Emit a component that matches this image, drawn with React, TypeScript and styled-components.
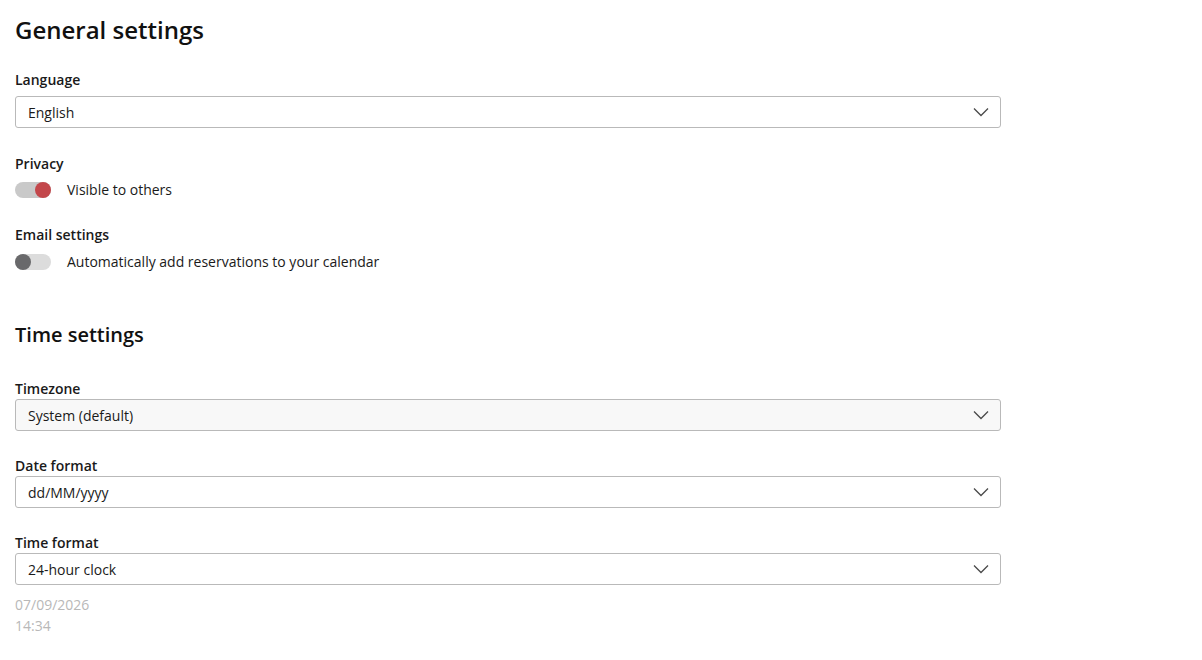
import React, { useState } from "react";
import styled, { createGlobalStyle } from "styled-components";

const GlobalStyle = createGlobalStyle`
  html, body {
    margin: 0;
    padding: 0;
    background: #ffffff;
  }
  body {
    font-family: "Open Sans", "Noto Sans", Arial, sans-serif;
    color: #1f1f1f;
    -webkit-font-smoothing: antialiased;
  }
`;

const Page = styled.div`
  padding: 14px 15px 20px 15px;
  width: 986px;
  display: flex;
  flex-direction: column;
`;

const SectionTitle = styled.h1<{ $size: number; $top: number; $bottom: number }>`
  margin: ${(p) => p.$top}px 0 ${(p) => p.$bottom}px 0;
  font-size: ${(p) => p.$size}px;
  line-height: 32px;
  font-weight: 600;
  color: #111;
`;

const Field = styled.div<{ $gap: number; $bottom: number }>`
  display: flex;
  flex-direction: column;
  gap: ${(p) => p.$gap}px;
  margin-bottom: ${(p) => p.$bottom}px;
`;

const Label = styled.div`
  font-size: 14px;
  line-height: 20px;
  font-weight: 600;
  color: #1a1a1a;
`;

const SelectBox = styled.div<{ $tint?: boolean }>`
  height: 32px;
  box-sizing: border-box;
  border: 1px solid #b9b9b9;
  border-radius: 3px;
  background: ${(p) => (p.$tint ? "#f8f8f8" : "#ffffff")};
  display: flex;
  align-items: center;
  justify-content: space-between;
  padding: 0 11px 0 12px;
  font-size: 14px;
  color: #1a1a1a;
`;

const Chevron = () => (
  <svg width="16" height="10" viewBox="0 0 16 10" fill="none">
    <path d="M1 1.5 L8 8.5 L15 1.5" stroke="#4a4a4a" strokeWidth="1.3" />
  </svg>
);

const ToggleRow = styled.label`
  display: flex;
  align-items: center;
  gap: 16px;
  font-size: 14px;
  line-height: 20px;
  color: #1a1a1a;
  cursor: pointer;
`;

const Track = styled.span<{ $on: boolean }>`
  position: relative;
  width: 36px;
  height: 16px;
  border-radius: 8px;
  background: ${(p) => (p.$on ? "#c9c9c9" : "#dcdcdc")};
  flex-shrink: 0;
`;

const Knob = styled.span<{ $on: boolean }>`
  position: absolute;
  top: 0;
  left: ${(p) => (p.$on ? "20px" : "0px")};
  width: 16px;
  height: 16px;
  border-radius: 50%;
  background: ${(p) => (p.$on ? "#c3474b" : "#69696b")};
`;

const Preview = styled.div`
  margin-top: 9px;
  font-size: 14px;
  line-height: 21px;
  color: #b8b8b8;
`;

const Toggle = ({ on, onClick }: { on: boolean; onClick: () => void }) => (
  <Track $on={on} onClick={onClick}>
    <Knob $on={on} />
  </Track>
);

export default function App() {
  const [visible, setVisible] = useState(true);
  const [autoAdd, setAutoAdd] = useState(false);

  return (
    <>
      <GlobalStyle />
      <Page>
        <SectionTitle $size={24} $top={0} $bottom={24}>
          General settings
        </SectionTitle>

        <Field $gap={6} $bottom={26}>
          <Label>Language</Label>
          <SelectBox>
            <span>English</span>
            <Chevron />
          </SelectBox>
        </Field>

        <Field $gap={6} $bottom={25}>
          <Label>Privacy</Label>
          <ToggleRow>
            <Toggle on={visible} onClick={() => setVisible(!visible)} />
            Visible to others
          </ToggleRow>
        </Field>

        <Field $gap={7} $bottom={47}>
          <Label>Email settings</Label>
          <ToggleRow>
            <Toggle on={autoAdd} onClick={() => setAutoAdd(!autoAdd)} />
            Automatically add reservations to your calendar
          </ToggleRow>
        </Field>

        <SectionTitle $size={20} $top={0} $bottom={28}>
          Time settings
        </SectionTitle>

        <Field $gap={0} $bottom={25}>
          <Label>Timezone</Label>
          <SelectBox $tint>
            <span>System (default)</span>
            <Chevron />
          </SelectBox>
        </Field>

        <Field $gap={0} $bottom={25}>
          <Label>Date format</Label>
          <SelectBox>
            <span>dd/MM/yyyy</span>
            <Chevron />
          </SelectBox>
        </Field>

        <Field $gap={0} $bottom={0}>
          <Label>Time format</Label>
          <SelectBox>
            <span>24-hour clock</span>
            <Chevron />
          </SelectBox>
        </Field>

        <Preview>
          07/09/2026
          <br />
          14:34
        </Preview>
      </Page>
    </>
  );
}
